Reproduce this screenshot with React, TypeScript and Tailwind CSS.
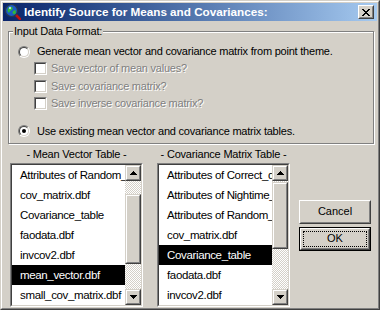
import React from "react";

const Raised = ({ children, className = "" }: { children?: React.ReactNode; className?: string }) => (
  <div className={`border border-t-white border-l-white border-b-[#404040] border-r-[#404040] ${className}`}>
    <div className="h-full w-full border border-t-[#d4d0c8] border-l-[#d4d0c8] border-b-[#808080] border-r-[#808080] flex items-center justify-center">
      {children}
    </div>
  </div>
);

const ScrollPiece = ({ children, className = "", style }: { children?: React.ReactNode; className?: string; style?: React.CSSProperties }) => (
  <div style={style} className={`border border-t-[#d4d0c8] border-l-[#d4d0c8] border-b-[#404040] border-r-[#404040] bg-[#d4d0c8] ${className}`}>
    <div className="h-full w-full border border-t-white border-l-white border-b-[#808080] border-r-[#808080] flex items-center justify-center">
      {children}
    </div>
  </div>
);

const Arrow = ({ up }: { up?: boolean }) => (
  <svg width="7" height="4" viewBox="0 0 7 4" shapeRendering="crispEdges">
    {up ? <polygon points="3.5,0 7,4 0,4" fill="#000" /> : <polygon points="0,0 7,0 3.5,4" fill="#000" />}
  </svg>
);

function ListBox({ items, selected, thumbTop, thumbH }: { items: string[]; selected: number; thumbTop: number; thumbH: number }) {
  return (
    <div className="w-[133px] h-[144px] border border-t-[#808080] border-l-[#808080] border-b-white border-r-white">
      <div className="h-full border border-t-[#404040] border-l-[#404040] border-b-[#d4d0c8] border-r-[#d4d0c8] bg-white flex">
        <div className="flex-1 min-w-0 overflow-hidden text-[11.5px] tracking-[-0.35px]">
          {items.map((it, i) => (
            <div
              key={i}
              className={`h-[20px] leading-[20px] pl-[8px] whitespace-nowrap ${i === selected ? "bg-black text-white" : "text-black"}`}
            >
              {it}
            </div>
          ))}
        </div>
        <div className="w-[16px] flex flex-col">
          <ScrollPiece className="h-[16px] shrink-0">
            <Arrow up />
          </ScrollPiece>
          <div className="flex-1 flex flex-col bg-[repeating-conic-gradient(#ffffff_0_25%,#d4d0c8_0_50%)] bg-[length:2px_2px]">
            <div style={{ height: thumbTop }} className="shrink-0" />
            <ScrollPiece style={{ height: thumbH }} className="shrink-0" />
          </div>
          <ScrollPiece className="h-[16px] shrink-0">
            <Arrow />
          </ScrollPiece>
        </div>
      </div>
    </div>
  );
}

const Radio = ({ checked }: { checked?: boolean }) => (
  <span className="w-[12px] h-[12px] shrink-0 rounded-full border border-t-[#808080] border-l-[#808080] border-b-white border-r-white flex">
    <span className="flex-1 rounded-full border border-t-[#404040] border-l-[#404040] border-b-[#d4d0c8] border-r-[#d4d0c8] bg-white flex items-center justify-center">
      {checked && <span className="w-[4px] h-[4px] rounded-full bg-black" />}
    </span>
  </span>
);

const Check = () => (
  <span className="w-[13px] h-[13px] shrink-0 border border-t-[#808080] border-l-[#808080] border-b-white border-r-white flex">
    <span className="flex-1 border border-t-[#404040] border-l-[#404040] border-b-[#d4d0c8] border-r-[#d4d0c8] bg-white" />
  </span>
);

const GlobeIcon = () => (
  <svg width="16" height="16" viewBox="0 0 16 16">
    <line x1="10" y1="10" x2="15" y2="15" stroke="#c01010" strokeWidth="2.5" strokeLinecap="round" />
    <circle cx="6.5" cy="6.5" r="6" fill="#1c5ac8" stroke="#2a3a4a" strokeWidth="1.2" />
    <path d="M3 4 L6 2.5 L8 4 L7 6 L5 7 L4 9 L2.5 7 Z" fill="#2fb83a" />
    <path d="M8 7 L10.5 6 L11 9 L9 10.5 L7.5 9 Z" fill="#2fb83a" />
    <circle cx="5" cy="4" r="1.2" fill="#cfe8ff" opacity="0.8" />
  </svg>
);

export default function App() {
  const list1 = [
    "Attributes of Random_",
    "cov_matrix.dbf",
    "Covariance_table",
    "faodata.dbf",
    "invcov2.dbf",
    "mean_vector.dbf",
    "small_cov_matrix.dbf",
  ];
  const list2 = [
    "Attributes of Correct_d",
    "Attributes of Nightime_",
    "Attributes of Random_",
    "cov_matrix.dbf",
    "Covariance_table",
    "faodata.dbf",
    "invcov2.dbf",
  ];
  const disabled = "text-[#808080] [text-shadow:1px_1px_0_#ffffff]";
  return (
    <div className="w-[380px] h-[310px] overflow-hidden bg-[#d4d0c8] border border-t-[#d4d0c8] border-l-[#d4d0c8] border-b-[#404040] border-r-[#404040] font-['Liberation_Sans',sans-serif] text-[11px] text-black">
      <div className="h-full border border-t-white border-l-white border-b-[#808080] border-r-[#808080] p-px flex flex-col">
        {/* Title bar */}
        <div className="h-[18px] shrink-0 flex items-center bg-linear-to-r from-[#0a246a] to-[#a6caf0]">
          <div className="ml-[2px] w-[16px] h-[16px]">
            <GlobeIcon />
          </div>
          <span className="ml-[3px] text-white font-bold text-[11.7px] leading-[18px] whitespace-nowrap">
            Identify Source for Means and Covariances:
          </span>
          <Raised className="ml-auto mr-[3px] w-[16px] h-[14px] bg-[#d4d0c8]">
            <svg width="8" height="7" viewBox="0 0 8 7" shapeRendering="crispEdges">
              <path d="M0 0h2l2 2.3L6 0h2L5 3.5 8 7H6L4 4.7 2 7H0l3-3.5z" fill="#000" />
            </svg>
          </Raised>
        </div>

        {/* Body */}
        <div className="flex-1 flex flex-col pl-[5px]">
          <fieldset className="mt-[4px] w-[366px] border border-[#808080] shadow-[1px_1px_0_#ffffff,inset_1px_1px_0_#ffffff]">
            <legend className="ml-[4px] px-[1px] leading-[12px] bg-[#d4d0c8] tracking-[-0.2px]">Input Data Format:</legend>
            <div className="flex flex-col pt-[6px] pb-[3px] tracking-[-0.22px]">
              <div className="h-[17px] flex items-center pl-[9px]">
                <Radio />
                <span className="ml-[7px] leading-[13px] whitespace-nowrap">
                  Generate mean vector and covariance matrix from point theme.
                </span>
              </div>
              {["Save vector of mean values?", "Save covariance matrix?", "Save inverse covariance matrix?"].map((t) => (
                <div key={t} className="h-[17.5px] flex items-center pl-[25px]">
                  <Check />
                  <span className={`ml-[4px] leading-[13px] whitespace-nowrap ${disabled}`}>{t}</span>
                </div>
              ))}
              <div className="mt-[10px] h-[17px] flex items-center pl-[9px]">
                <Radio checked />
                <span className="ml-[7px] leading-[13px] whitespace-nowrap">
                  Use existing mean vector and covariance matrix tables.
                </span>
              </div>
            </div>
          </fieldset>

          <div className="flex items-start ml-[2px] mt-[1px]">
            <div className="flex flex-col w-[133px]">
              <div className="h-[18px] leading-[18px] text-center whitespace-nowrap tracking-[-0.2px]">- Mean Vector Table -</div>
              <ListBox items={list1} selected={5} thumbTop={13} thumbH={70} />
            </div>
            <div className="flex flex-col w-[133px] ml-[14px]">
              <div className="h-[18px] leading-[18px] text-center whitespace-nowrap tracking-[-0.2px]">- Covariance Matrix Table -</div>
              <ListBox items={list2} selected={4} thumbTop={1} thumbH={67} />
            </div>
            <div className="ml-[9px] mt-[55px] flex flex-col gap-[3px]">
              <Raised className="w-[72px] h-[24px]">
                <span className="leading-[13px]">Cancel</span>
              </Raised>
              <div className="w-[72px] h-[24px] border border-black">
                <Raised className="w-full h-full">
                  <div className="m-[1px] flex-1 self-stretch border border-dotted border-black flex items-center justify-center">
                    <span className="leading-[13px]">OK</span>
                  </div>
                </Raised>
              </div>
            </div>
          </div>
        </div>
      </div>
    </div>
  );
}
